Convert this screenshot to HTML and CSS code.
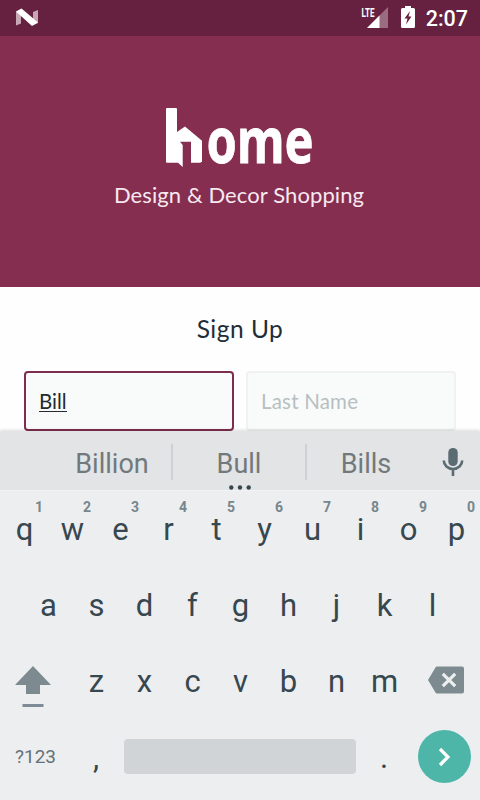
FILE: index.html
```html
<!DOCTYPE html>
<html lang="en">
<head>
<meta charset="utf-8">
<title>Home – Sign Up</title>
<link rel="stylesheet" href="styles.css">
</head>
<body>
<div class="status">
  <svg class="nougat" width="24" height="20" viewBox="0 0 24 20"><path d="M1 3.500L6 1.500V15.500L1 17.500z" fill="#c7a7b5"/><path d="M18 4L23 2V15L18 17z" fill="#c7a7b5"/><path d="M1 3.500L6.500 .5L23 14.500L17 18z" fill="#fff"/></svg>
  <svg class="signal" width="28" height="24" viewBox="0 0 28 24"><path d="M27 3V24H6z" fill="#9b6b80"/><path d="M18.500 11.500V24H6z" fill="#fff"/><text x="0.500" y="12.500" textLength="13" lengthAdjust="spacingAndGlyphs">LTE</text></svg>
  <svg class="battery" width="14" height="22" viewBox="0 0 14 22"><path d="M4 0H10V2H12.500Q14 2 14 3.500V20.500Q14 22 12.500 22H1.500Q0 22 0 20.500V3.500Q0 2 1.500 2H4z" fill="#fff"/><path d="M9 5L3.500 12.500H6.500L5 18.500L10.500 10.500H7.500z" fill="#65213f"/></svg>
  <span class="time">2:07</span>
</div>
<header class="hero">
  <svg class="logo" width="160" height="100" viewBox="160 87 160 100" role="img" aria-label="home">
    <path d="M166 109Q166 108 167 108H176Q177 108 177 109V132L185 126.500L202 140.700V162H201L200.500 162.800H191V141.700H180L182.700 145V167L178 162.800H167Q166 162.800 166 162z" fill="#fff"/>
    <text class="wordmark" x="206.500" y="162.500" textLength="107" lengthAdjust="spacingAndGlyphs">ome</text>
  </svg>
  <p class="tagline">Design &amp; Decor Shopping</p>
</header>
<main class="form">
  <h1>Sign Up</h1>
  <div class="fields">
    <div class="field active"><span>Bill</span></div>
    <div class="field empty"><span>Last Name</span></div>
  </div>
</main>
<section class="keyboard">
  <div class="suggest">
    <span class="word">Billion</span><i></i>
    <span class="word mid">Bull<svg class="dots" width="22" height="5" viewBox="0 0 22 5"><circle cx="2.300" cy="2.500" r="2.200"/><circle cx="11" cy="2.500" r="2.200"/><circle cx="19.700" cy="2.500" r="2.200"/></svg></span><i></i>
    <span class="word last">Bills</span>
    <svg class="mic" width="22" height="30" viewBox="0 0 22 30"><rect x="6.300" y="1" width="9.400" height="18" rx="4.500" fill="#5b6b72"/><path d="M1.800 13.500A9.200 8.500 0 0 0 20.200 13.500M11 22V29" fill="none" stroke="#5b6b72" stroke-width="2.600"/></svg>
  </div>
  <div class="row">
    <b>q<sup>1</sup></b><b>w<sup>2</sup></b><b>e<sup>3</sup></b><b>r<sup>4</sup></b><b>t<sup>5</sup></b><b>y<sup>6</sup></b><b>u<sup>7</sup></b><b>i<sup>8</sup></b><b>o<sup>9</sup></b><b>p<sup>0</sup></b>
  </div>
  <div class="row home-row">
    <b>a</b><b>s</b><b>d</b><b>f</b><b>g</b><b>h</b><b>j</b><b>k</b><b>l</b>
  </div>
  <div class="row">
    <span class="side shift"><svg width="36" height="43" viewBox="0 0 36 43"><path d="M18 1L36 20H25V29H11V20H0z" fill="#7d8b90"/><path d="M7.500 39H28.500V42H7.500z" fill="#7f8b97"/></svg></span>
    <b>z</b><b>x</b><b>c</b><b>v</b><b>b</b><b>n</b><b>m</b>
    <span class="side erase"><svg width="36" height="28" viewBox="0 0 36 28"><path d="M9 .5H34Q36 .5 36 2.500V25.500Q36 27.500 34 27.500H9Q8 27.500 7.500 26.500L0 14L7.500 1.500Q8 .5 9 .5z" fill="#7d8b90"/><path d="M14.800 7.800L27.200 20.200M27.200 7.800L14.800 20.200" stroke="#eceff0" stroke-width="3.200"/></svg></span>
  </div>
  <div class="row bottom">
    <span class="symbols">?123</span>
    <b>,</b>
    <span class="space"></span>
    <b class="period">.</b>
    <span class="go"><svg width="14" height="20" viewBox="0 0 14 20"><path d="M2 2L10 10L2 18" fill="none" stroke="#fff" stroke-width="3.200"/></svg></span>
  </div>
</section>
</body>
</html>
```
FILE: styles.css
```css
* { box-sizing: border-box; }
body {
  margin: 0;
  width: 480px;
  height: 800px;
  overflow: hidden;
  background: #fefefe;
  font-family: Roboto, sans-serif;
}
svg { display: block; flex: none; }

.status {
  display: flex;
  align-items: flex-start;
  height: 36px;
  padding: 6px 12px 0 15px;
  background: #65213f;
}
.nougat { margin-top: 2px; }
.signal { margin-left: auto; margin-top: -2px; }
.signal text { font: 700 13.5px Roboto, sans-serif; fill: #fff; }
.battery { margin-left: 12px; }
.time {
  margin-left: 11px;
  font-size: 21.5px;
  font-weight: 500;
  line-height: 26px;
  color: #fff;
}

.hero {
  display: flex;
  flex-direction: column;
  align-items: center;
  height: 251px;
  padding-top: 51px;
  background: #852e50;
}
.wordmark {
  font: 700 63px "Noto Sans", sans-serif;
  fill: #fff;
  stroke: #fff;
  stroke-width: .8;
}
.tagline {
  margin: -6px 0 0;
  padding-right: 2px;
  font: 400 22px/28px Lato, sans-serif;
  letter-spacing: .1px;
  color: #f7e9f0;
}

.form {
  height: 144px;
  padding: 26px 24px 0;
}
h1 {
  margin: 0;
  text-align: center;
  font: 400 24.5px/32px Lato, sans-serif;
  letter-spacing: .5px;
  color: #1f2d38;
}
.fields { display: flex; gap: 12px; margin-top: 26px; }
.field {
  width: 210px;
  height: 60px;
  padding: 14px 13px;
  border: 2px solid #f0f2f2;
  border-radius: 4px;
  background: #f9fbfb;
  font: 400 20.5px/28px Lato, sans-serif;
}
.active { border-color: #7d2d4d; color: #222b2d; }
.active span { display: inline-block; height: 25px; line-height: 28px; border-bottom: 1px solid #222b2d; }
.empty { color: #b7bfc1; letter-spacing: .2px; }

.keyboard {
  position: relative;
  height: 369px;
  background: #eceef0;
  box-shadow: 0 -1px 3px #0002;
}
.suggest {
  display: flex;
  align-items: center;
  height: 60px;
  padding-left: 53px;
  background: #e2e4e6;
  border-bottom: 1px solid #f0f2f3;
}
.suggest i { width: 2px; height: 36px; margin-top: 3px; background: #cdd1d3; }
.word {
  position: relative;
  width: 118px;
  padding-top: 7px;
  text-align: center;
  font-size: 27px;
  line-height: 32px;
  color: #71797c;
}
.word.mid { width: 132px; }
.word.last { width: 118px; }
.dots { position: absolute; left: 56px; top: 44px; fill: #37474f; }
.mic { margin-left: 17px; margin-right: 1px; margin-top: 3px; }

.row { display: flex; height: 76px; }
.row b {
  position: relative;
  width: 48px;
  padding: 21px 0 0 1px;
  text-align: center;
  font-size: 31px;
  font-weight: 400;
  line-height: 36px;
  color: #37474f;
}
.row sup {
  position: absolute;
  left: 31px;
  top: 8px;
  width: 16px;
  font-size: 14px;
  font-weight: 700;
  line-height: 16px;
  color: #78868b;
}
.home-row { padding-left: 24px; }
.side { width: 72px; }
.shift { padding: 22px 0 0 15px; }
.erase { padding: 23px 0 0 20px; }
.bottom b { padding: 21px 0 0; }
.symbols {
  width: 72px;
  padding: 26px 0 0 15px;
  font-size: 19px;
  line-height: 24px;
  color: #667277;
}
.space {
  width: 232px;
  height: 35px;
  margin: 20px 4px 0;
  border-radius: 4px;
  background: #d1d4d6;
}
.go {
  display: flex;
  align-items: center;
  justify-content: center;
  width: 53px;
  height: 53px;
  margin: 11px 0 0 10px;
  border-radius: 50%;
  background: #4eb5a9;
}
```
